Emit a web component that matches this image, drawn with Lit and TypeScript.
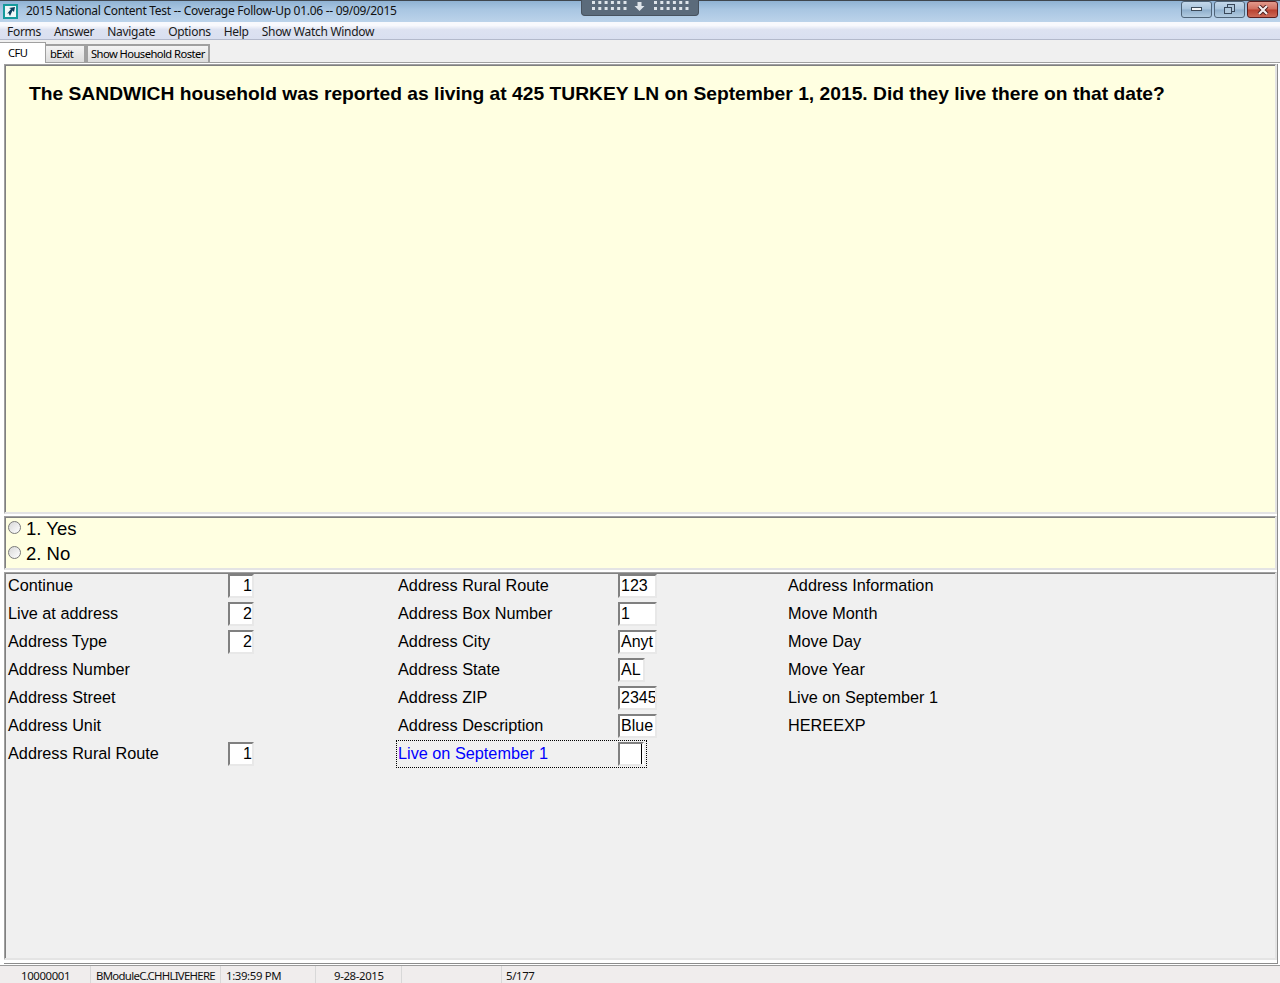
import { LitElement, html, svg, css, nothing } from "lit";
import { customElement } from "lit/decorators.js";

type Field = { label: string; value?: string; w?: number; align?: string; active?: boolean };

const COLS: Field[][] = [
  [
    { label: "Continue", value: "1", w: 26, align: "r" },
    { label: "Live at address", value: "2", w: 26, align: "r" },
    { label: "Address Type", value: "2", w: 26, align: "r" },
    { label: "Address Number" },
    { label: "Address Street" },
    { label: "Address Unit" },
    { label: "Address Rural Route", value: "1", w: 26, align: "r" },
  ],
  [
    { label: "Address Rural Route", value: "123", w: 39 },
    { label: "Address Box Number", value: "1", w: 39 },
    { label: "Address City", value: "Anyt", w: 39 },
    { label: "Address State", value: "AL", w: 27 },
    { label: "Address ZIP", value: "2345", w: 39 },
    { label: "Address Description", value: "Blue", w: 39 },
    { label: "Live on September 1", value: "", w: 26, active: true },
  ],
  [
    { label: "Address Information" },
    { label: "Move Month" },
    { label: "Move Day" },
    { label: "Move Year" },
    { label: "Live on September 1" },
    { label: "HEREEXP" },
  ],
];

@customElement("app-root")
export class AppRoot extends LitElement {
  static styles = css`
    :host {
      display: flex;
      flex-direction: column;
      width: 1280px;
      height: 983px;
      overflow: hidden;
      background: #f0f0f0;
      font-family: "Liberation Sans", Arial, sans-serif;
      color: #000;
      position: relative;
    }
    .ui { font-family: "Noto Sans", "DejaVu Sans", sans-serif; font-size: 12px; letter-spacing: -0.29px; font-variant-ligatures: none; }
    .title {
      height: 22px; flex: none; display: flex; align-items: center;
      background: linear-gradient(#8fb2d3 0%, #a9c6e2 40%, #bcd3ea 100%);
      border-top: 1px solid #3f464e; box-sizing: border-box; color: #111; position: relative;
    }
    .logo { width: 15px; height: 15px; margin: 0 8px 0 3px; flex: none; display: block; }
    .title-text { flex: 1; margin-top: -2px; }
    .notch {
      position: absolute; left: 581px; top: -1px; width: 118px; height: 16px; box-sizing: border-box;
      background: #5b6b7b; border: 1px solid #47525e; border-top: none; border-radius: 0 0 4px 4px;
    }
    .notch svg { display: block; }
    .winbtns { display: flex; gap: 2px; margin: 0 2px 4px 0; }
    .winbtn {
      width: 31px; height: 17px; box-sizing: border-box; border: 1px solid #4f6478; border-radius: 3px;
      background: linear-gradient(#c4d8ea 0%, #a9c4dc 48%, #8fafcc 52%, #b2cbe0 100%);
      display: flex; align-items: center; justify-content: center;
    }
    .winbtn.close { border-color: #5c1d1d; background: linear-gradient(#e29a8c 0%, #cf6e5e 48%, #b8402f 52%, #cc6a58 100%); }
    .menu {
      height: 18px; flex: none; display: flex; align-items: center; gap: 13px; padding: 1px 0 0 7px; box-sizing: border-box;
      background: linear-gradient(#f8f9fd 0 20%, #dde2f1 45%, #d9dff0 100%);
      border-bottom: 1px solid #b3b9cb; color: #1a1a1a;
    }
    .tabs { height: 22px; flex: none; display: flex; align-items: flex-end; box-sizing: border-box; white-space: nowrap; }
    .tab {
      box-sizing: border-box; height: 18px; display: flex; align-items: center; padding: 0 0 2px 4px;
      border: 2px solid #a0a0a0; border-bottom: none; border-left: none; background: linear-gradient(#f4f4f4, #dcdcdc);
      letter-spacing: -0.55px; font-size: 11.2px;
    }
    .tab.on { height: 21px; width: 46px; background: #fff; border: 1px solid #a0a0a0; border-left: none; border-bottom: none; padding: 0 0 2px 8px; margin-bottom: -1px; position: relative; z-index: 1; }
    .tab.b { width: 40px; }
    .tab.c { width: 124px; border-left: 2px solid #a0a0a0; padding-left: 3px; }
    .body {
      flex: 1; min-height: 0; display: flex; flex-direction: column; box-sizing: border-box;
      padding: 1px 2px 1px 4px; border-top: 1px solid #a0a0a0; background: #fff;
      border-bottom: 1px solid #9a9a9a;
    }
    .frame {
      flex: 1; min-height: 0; display: flex; flex-direction: column; gap: 2px; box-sizing: border-box;
      border-right: 1px solid #8c8c8c; border-bottom: 1px solid #8c8c8c; padding: 0 0 3px 0;
    }
    .pane {
      box-sizing: border-box; border-style: solid; border-width: 1px 2px 2px 1px;
      border-color: #a0a0a0 #e4e4e4 #e4e4e4 #a0a0a0; box-shadow: inset 1px 1px 0 #808080;
    }
    .q { height: 450px; flex: none; background: #ffffe1; padding: 17px 0 0 24px; font-size: 19.24px; font-weight: 700; line-height: 24px; white-space: nowrap; }
    .a { height: 54px; flex: none; background: #ffffe1; padding: 0 0 0 3px; font-size: 18.5px; }
    .opts { margin-top: -1px; }
    .opt { height: 25px; display: flex; align-items: center; }
    .radio {
      width: 13px; height: 13px; box-sizing: border-box; border-radius: 50%; margin: 0 5px 2px 0; flex: none;
      border: 1px solid #7a7a7a; background: linear-gradient(135deg, #d8d8d8, #fff);
    }
    .f { flex: 1; min-height: 0; background: #f0f0f0; padding: 1px 0 0 3px; display: grid; grid-template-columns: 390px 390px 1fr; font-size: 16.25px; align-content: start; }
    .col { margin-top: -2px; }
    .row { height: 28px; display: flex; align-items: center; position: relative; }
    .row .lb { width: 220px; flex: none; margin-bottom: 1px; white-space: nowrap; }
    .box {
      box-sizing: border-box; height: 24px; background: #fff; flex: none; overflow: hidden; white-space: nowrap;
      border: 2px solid #e8e8e8; border-top-color: #808080; border-left-color: #808080; line-height: 20px; padding-left: 1px;
      display: flex; font-size: 16px;
    }
    .box.r { justify-content: flex-end; padding-right: 0; padding-left: 0; }
    .active .lb { color: #0000ff; }
    .active .box { border-right-color: #fff; }
    .focus { position: absolute; left: -2px; top: 0; height: 28px; box-sizing: border-box; border: 1px dotted #000; pointer-events: none; }
    .caret { width: 1px; height: 20px; background: #000; margin-left: 20px; flex: none; }
    .status {
      height: 17px; flex: none; display: flex; background: #f0eded; color: #111; box-sizing: border-box; align-items: center;
      font-size: 11.4px; letter-spacing: -0.37px;
    }
    .cell { box-sizing: border-box; height: 100%; padding-top: 1px; border-right: 1px solid #d8d8d8; display: flex; align-items: center; white-space: nowrap; overflow: hidden; }
    .tight { letter-spacing: -0.7px; }
  `;

  private field(f: Field) {
    return html`<div class="row ${f.active ? "active" : ""}">
      <span class="lb">${f.label}</span>
      ${f.w
        ? html`<span class="box ${f.align === "r" ? "r" : ""}" style="width:${f.w}px">${f.active
            ? html`<span class="caret"></span>`
            : f.value}</span>`
        : nothing}
      ${f.active ? html`<span class="focus" style="width:251px"></span>` : nothing}
    </div>`;
  }

  render() {
    const dots = (x: number) => {
      const out = [];
      for (let r = 0; r < 2; r++) for (let c = 0; c < 6; c++)
        out.push(svg`<rect x=${x + c * 6.3} y=${1 + r * 6} width="3" height="3" fill="#dfe5ea" />`);
      return out;
    };
    return html`
      <div class="title ui">
        <svg class="logo" viewBox="0 0 15 15">
          <rect width="15" height="15" fill="#159a9c" />
          <rect x="2" y="2" width="11" height="11" fill="#eef7f7" />
          <path d="M4 10 L8 5 L6 4 L12 3 L11 8 L9.500 6.500 L7 12 L5.500 9Z" fill="#0d3f5c" />
        </svg>
        <span class="title-text">2015 National Content Test -- Coverage Follow-Up 01.06 -- 09/09/2015</span>
        <div class="notch">
          <svg width="116" height="15" viewBox="0 0 116 15">
            ${dots(10)}${dots(72)}
            <path d="M55.500 2h4v4h3l-5 5l-5-5h3z" fill="#dfe5ea" />
          </svg>
        </div>
        <div class="winbtns">
          <div class="winbtn"><svg width="12" height="5"><rect x=".5" y=".5" width="10" height="3" fill="#f4f6f8" stroke="#3c4a58" /></svg></div>
          <div class="winbtn"><svg width="13" height="11" fill="#b0c8dc" stroke="#39485a"><rect x="4.500" y=".5" width="7" height="7" /><rect x="1.500" y="3.500" width="7" height="6" /></svg></div>
          <div class="winbtn close"><svg width="12" height="10"><path d="M2 1l8 8M10 1l-8 8" stroke="#4a1a1a" stroke-width="4" /><path d="M2 1l8 8M10 1l-8 8" stroke="#f4f0f0" stroke-width="2.200" /></svg></div>
        </div>
      </div>
      <div class="menu ui">
        <span>Forms</span><span>Answer</span><span>Navigate</span><span>Options</span><span>Help</span><span>Show Watch Window</span>
      </div>
      <div class="tabs ui">
        <div class="tab on">CFU</div>
        <div class="tab b">bExit</div>
        <div class="tab c">Show Household Roster</div>
      </div>
      <div class="body">
        <div class="frame">
          <div class="pane q">The SANDWICH household was reported as living at 425 TURKEY LN on September 1, 2015. Did they live there on that date?</div>
          <div class="pane a">
            <div class="opts">
              <div class="opt"><span class="radio"></span>1. Yes</div>
              <div class="opt"><span class="radio"></span>2. No</div>
            </div>
          </div>
          <div class="pane f">
            ${COLS.map((c) => html`<div class="col">${c.map((f) => this.field(f))}</div>`)}
          </div>
        </div>
      </div>
      <div class="status ui">
        <div class="cell" style="width:91px;padding-left:21px">10000001</div>
        <div class="cell tight" style="width:130px;padding-left:5px">BModuleC.CHHLIVEHERE</div>
        <div class="cell" style="width:95px;padding-left:5px">1:39:59 PM</div>
        <div class="cell" style="width:86px;padding-left:18px">9-28-2015</div>
        <div class="cell" style="width:100px"></div>
        <div class="cell" style="flex:1;padding-left:4px;border-right:none">5/177</div>
      </div>
    `;
  }
}
